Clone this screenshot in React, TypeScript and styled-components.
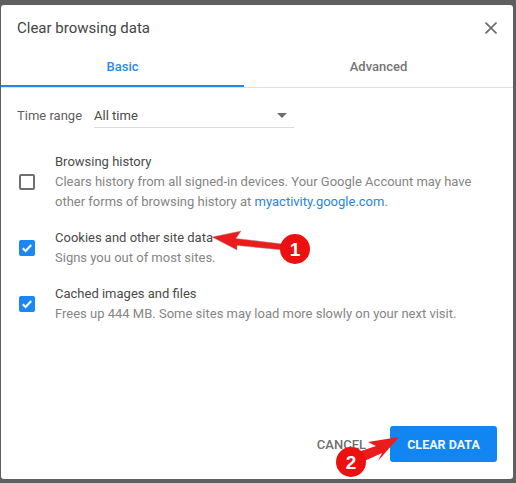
import React from 'react'
import styled, { createGlobalStyle } from 'styled-components'

const GlobalStyle = createGlobalStyle`
  html, body {
    margin: 0;
    padding: 0;
    background: #5f5f5f;
  }
  body {
    font-family: Roboto, "Liberation Sans", sans-serif;
    overflow: hidden;
  }
`

const Page = styled.div`
  position: relative;
  width: 516px;
  height: 483px;
  padding: 5px 3px 4px 1px;
  box-sizing: border-box;
`

const Dialog = styled.div`
  display: flex;
  flex-direction: column;
  height: 100%;
  background: #fff;
  border-radius: 3px;
  box-sizing: border-box;
`

const Header = styled.div`
  display: flex;
  align-items: center;
  justify-content: space-between;
  height: 46px;
  padding: 0 16px;
`

const Title = styled.h1`
  margin: 0;
  font-size: 15px;
  font-weight: 400;
  color: #444;
`

const CloseButton = styled.button`
  display: flex;
  padding: 0;
  border: 0;
  background: none;
`

const Tabs = styled.div`
  display: flex;
  height: 36px;
  border-bottom: 1px solid #e0e0e0;
`

const Tab = styled.div<{ $active?: boolean }>`
  flex: ${(props) => (props.$active ? '0 0 243px' : '1')};
  height: 36px;
  padding-top: 8px;
  box-sizing: border-box;
  text-align: center;
  font-size: 13px;
  line-height: 16px;
  font-weight: 500;
  color: ${(props) => (props.$active ? '#2a8af0' : '#757575')};
  border-bottom: 2px solid ${(props) => (props.$active ? '#2187f3' : 'transparent')};
`

const Body = styled.div`
  flex: 1;
  padding: 16px 16px 0;
`

const RangeRow = styled.div`
  display: flex;
  align-items: baseline;
  gap: 12px;
  margin-bottom: 24px;
  font-size: 13px;
  color: #5f5f5f;
`

const Select = styled.div`
  display: flex;
  align-items: center;
  justify-content: space-between;
  width: 200px;
  height: 24px;
  padding: 0 7px 0 0;
  box-sizing: border-box;
  border-bottom: 1px solid #dcdcdc;
  color: #4a4a4a;
`

const Caret = styled.span`
  width: 0;
  height: 0;
  border-left: 5px solid transparent;
  border-right: 5px solid transparent;
  border-top: 5px solid #6e6e6e;
`

const Options = styled.div`
  display: flex;
  flex-direction: column;
  gap: 16px;
`

const Option = styled.div`
  display: flex;
  align-items: center;
  gap: 20px;
  padding-left: 2px;
`

const Box = styled.span<{ $checked?: boolean }>`
  display: flex;
  align-items: center;
  justify-content: center;
  flex: none;
  width: 16px;
  height: 16px;
  box-sizing: border-box;
  border-radius: 2px;
  background: ${(props) => (props.$checked ? '#1b87f3' : '#fff')};
  border: ${(props) => (props.$checked ? '0' : '2px solid #6f6f6f')};
`

const OptionText = styled.div`
  font-size: 13px;
  line-height: 20px;
`

const OptionTitle = styled.div`
  color: #4a4a4a;
`

const OptionDesc = styled.div`
  color: #858585;
  white-space: nowrap;
`

const Link = styled.span`
  color: #2a84e0;
`

const Footer = styled.div`
  display: flex;
  align-items: center;
  justify-content: flex-end;
  gap: 24px;
  padding: 0 16px 17px 0;
`

const CancelButton = styled.button`
  padding: 0;
  border: 0;
  background: none;
  font-family: inherit;
  font-size: 13px;
  font-weight: 500;
  color: #6f6f6f;
`

const ClearButton = styled.button`
  width: 107px;
  height: 36px;
  padding: 0;
  border: 0;
  border-radius: 3px;
  background: #1186f3;
  color: #eef6fe;
  font-family: inherit;
  font-size: 12.5px;
  font-weight: 700;
`

const Callout = styled.svg<{ $left: number; $top: number }>`
  position: absolute;
  left: ${(props) => props.$left}px;
  top: ${(props) => props.$top}px;
  overflow: visible;
`

const BadgeLabel = styled.text`
  font-family: "Liberation Sans", sans-serif;
  font-size: 19px;
  font-weight: 700;
  fill: #fff;
  text-anchor: middle;
`

const Check = () => (
  <svg width="12" height="12" viewBox="0 0 12 12">
    <path d="M1.8 6.2 4.6 9 10.2 3" fill="none" stroke="#fff" strokeWidth="2" />
  </svg>
)

const App: React.FC = () => {
  return (
    <Page>
      <GlobalStyle />
      <Dialog>
        <Header>
          <Title>Clear browsing data</Title>
          <CloseButton>
            <svg width="12" height="12" viewBox="0 0 12 12">
              <path d="M.5.5l11 11M11.5.5l-11 11" stroke="#6b6b6b" strokeWidth="1.6" />
            </svg>
          </CloseButton>
        </Header>
        <Tabs>
          <Tab $active>Basic</Tab>
          <Tab>Advanced</Tab>
        </Tabs>
        <Body>
          <RangeRow>
            Time range
            <Select>
              All time
              <Caret />
            </Select>
          </RangeRow>
          <Options>
            <Option>
              <Box />
              <OptionText>
                <OptionTitle>Browsing history</OptionTitle>
                <OptionDesc>Clears history from all signed-in devices. Your Google Account may have</OptionDesc>
                <OptionDesc>
                  other forms of browsing history at <Link>myactivity.google.com</Link>.
                </OptionDesc>
              </OptionText>
            </Option>
            <Option>
              <Box $checked>
                <Check />
              </Box>
              <OptionText>
                <OptionTitle>Cookies and other site data</OptionTitle>
                <OptionDesc>Signs you out of most sites.</OptionDesc>
              </OptionText>
            </Option>
            <Option>
              <Box $checked>
                <Check />
              </Box>
              <OptionText>
                <OptionTitle>Cached images and files</OptionTitle>
                <OptionDesc>Frees up 444 MB. Some sites may load more slowly on your next visit.</OptionDesc>
              </OptionText>
            </Option>
          </Options>
        </Body>
        <Footer>
          <CancelButton>CANCEL</CancelButton>
          <ClearButton>CLEAR DATA</ClearButton>
        </Footer>
      </Dialog>

      <Callout $left={210} $top={225} width="105" height="45">
        <path d="M2 12 L31 6 L26 13.5 L73 19 L73 25 L27 20.5 L27 25 Z" fill="#ec1c1c" stroke="#999" strokeWidth="0.5" />
        <circle cx="85" cy="24" r="15" fill="#ec1010" />
        <BadgeLabel x="85" y="31">1</BadgeLabel>
      </Callout>

      <Callout $left={330} $top={430} width="75" height="50">
        <path d="M69 7 L38 12 L46 16 L25 23 L30 33 L52 23 L48 31 Z" fill="#ec1c1c" />
        <circle cx="21" cy="32" r="15" fill="#ec1010" />
        <BadgeLabel x="21" y="39">2</BadgeLabel>
      </Callout>
    </Page>
  )
}

export default App
